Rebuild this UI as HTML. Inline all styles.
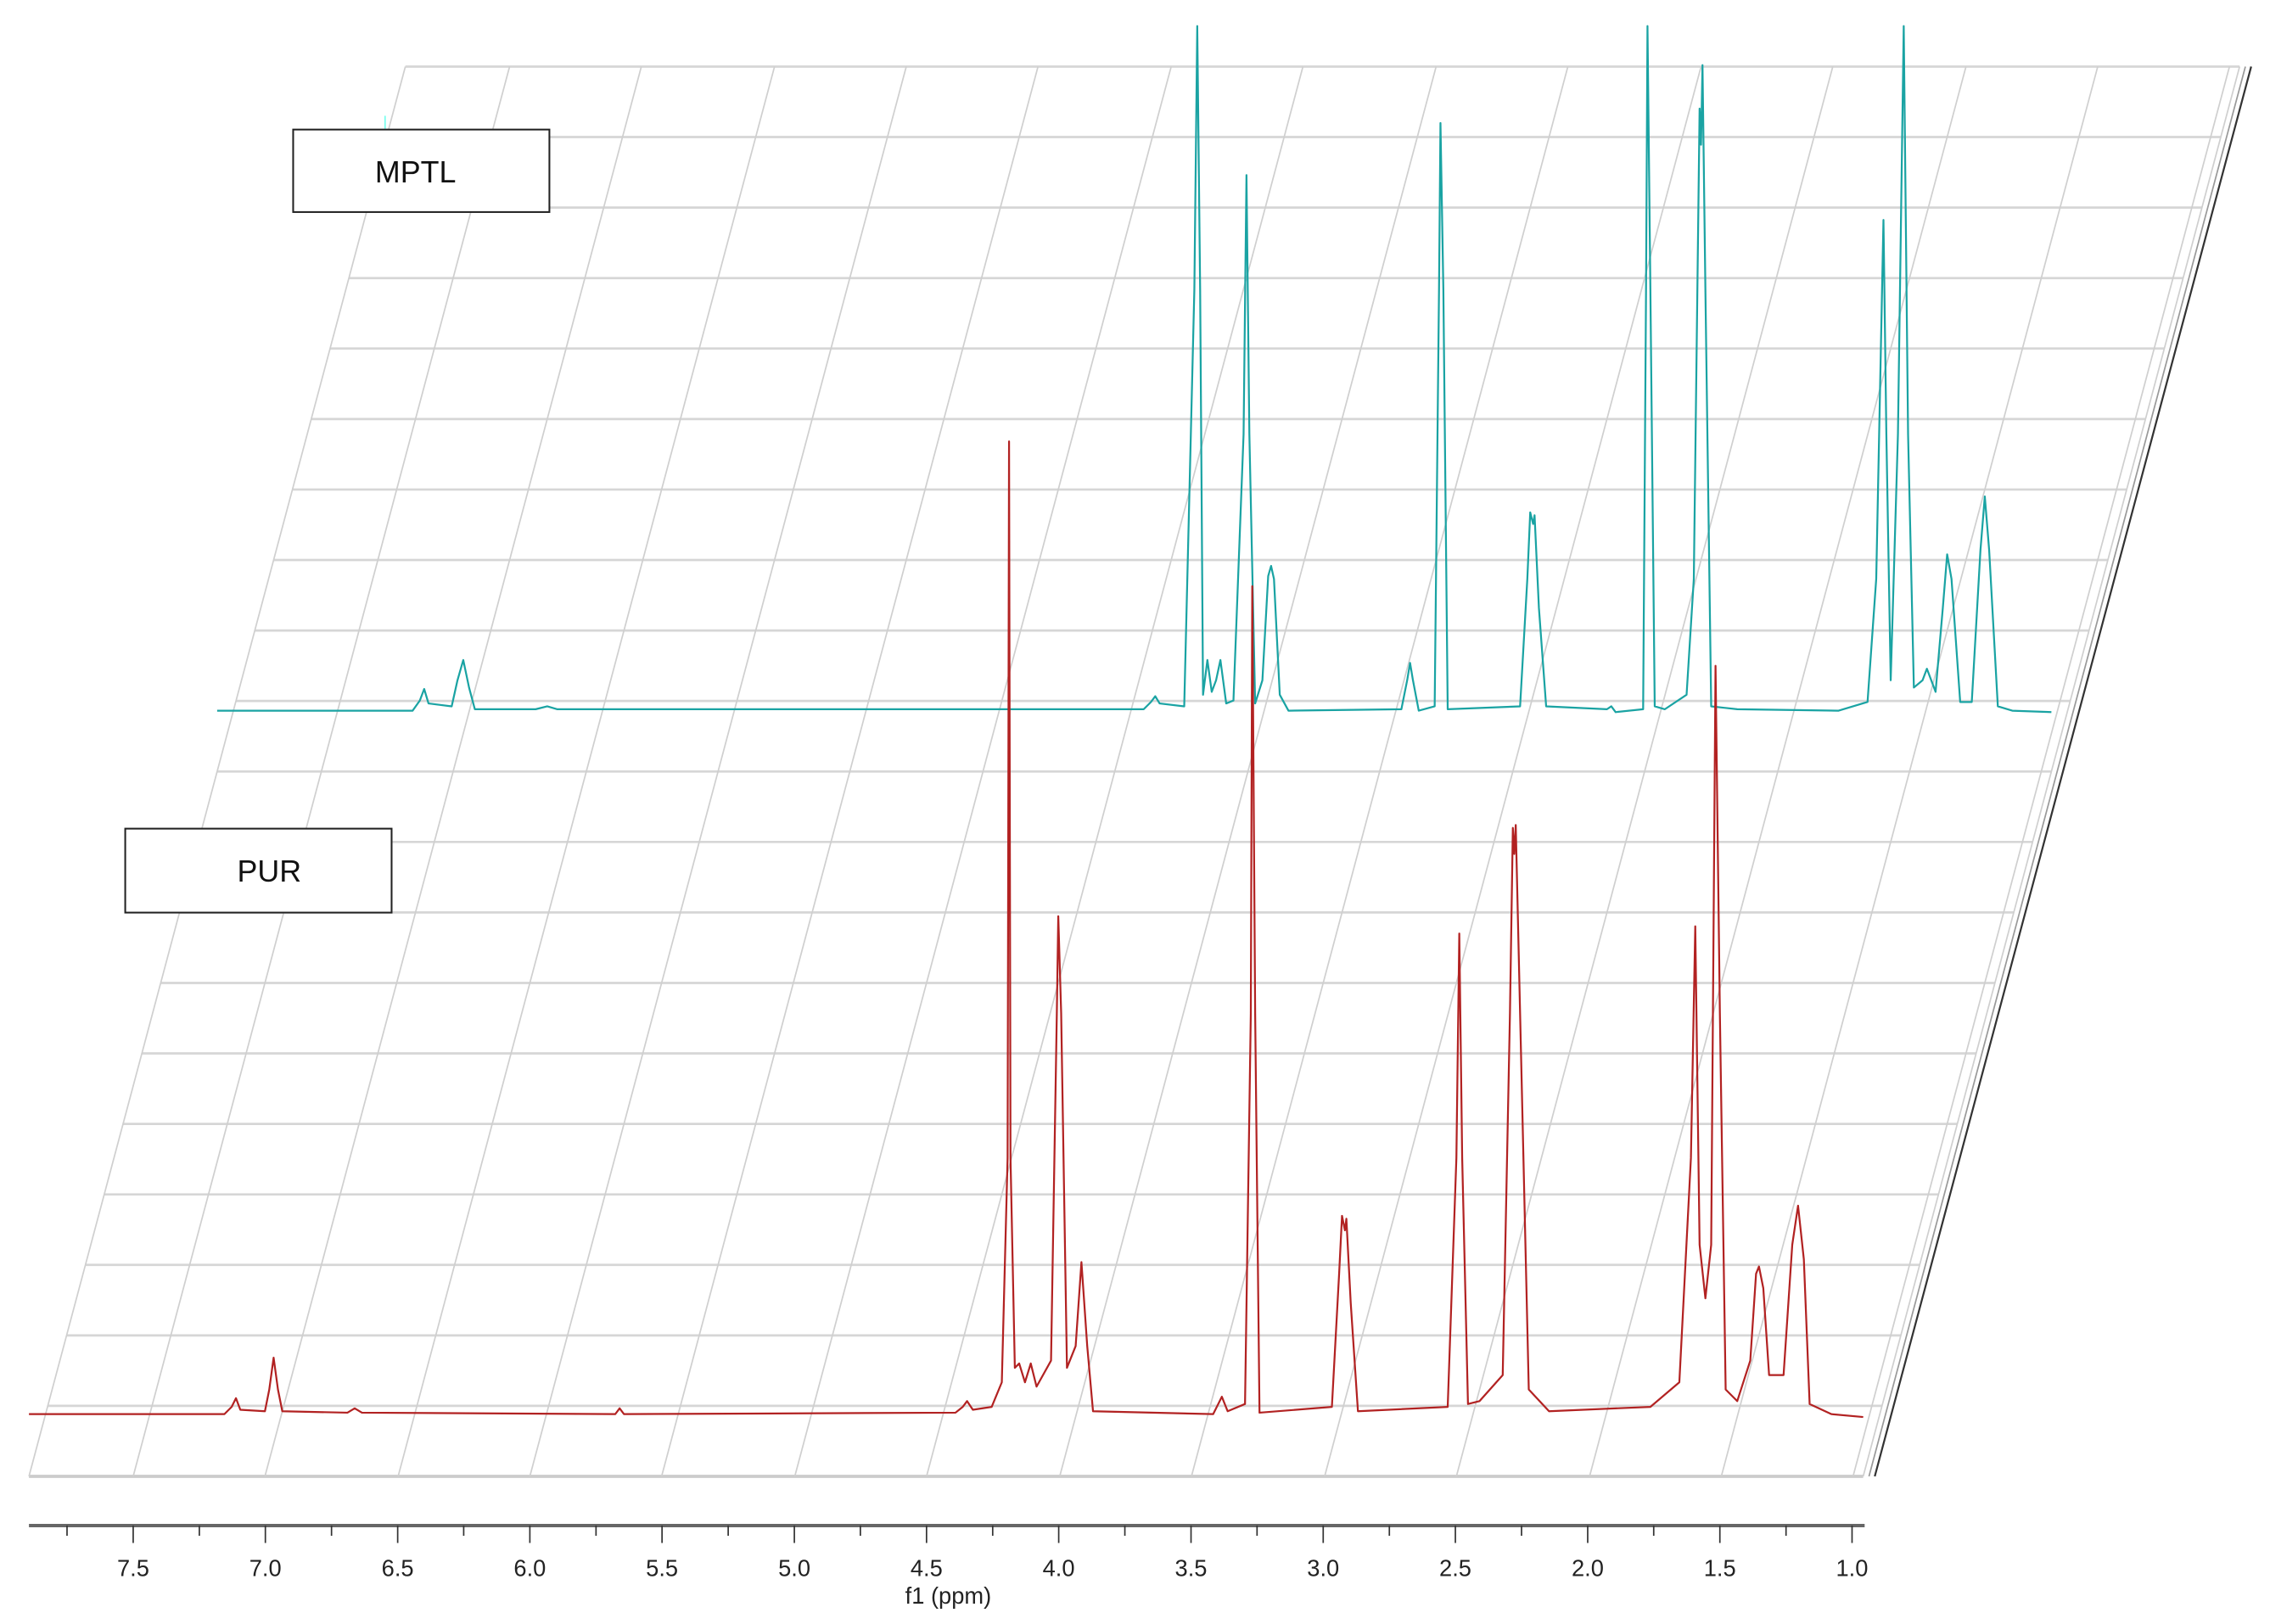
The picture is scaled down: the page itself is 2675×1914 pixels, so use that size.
<!DOCTYPE html>
<html><head><meta charset="utf-8"><style>html,body{margin:0;padding:0;background:#fff}svg{display:block}</style></head>
<body>
<svg width="2675" height="1914" viewBox="0 0 1568 1122" preserveAspectRatio="none" xmlns="http://www.w3.org/2000/svg">
<rect width="1568" height="1122" fill="#fff"/>
<g stroke="#d6d6d6" stroke-width="1.6" fill="none">
<line x1="280" y1="46" x2="1547" y2="46"/>
<line x1="267" y1="94.7" x2="1534" y2="94.7"/>
<line x1="254" y1="143.4" x2="1521" y2="143.4"/>
<line x1="241" y1="192.1" x2="1508" y2="192.1"/>
<line x1="228" y1="240.8" x2="1495" y2="240.8"/>
<line x1="215" y1="289.5" x2="1482" y2="289.5"/>
<line x1="202" y1="338.2" x2="1469" y2="338.2"/>
<line x1="189" y1="386.9" x2="1456" y2="386.9"/>
<line x1="176" y1="435.6" x2="1443" y2="435.6"/>
<line x1="163" y1="484.3" x2="1430" y2="484.3"/>
<line x1="150" y1="533" x2="1417" y2="533"/>
<line x1="137" y1="581.7" x2="1404" y2="581.7"/>
<line x1="124" y1="630.4" x2="1391" y2="630.4"/>
<line x1="111" y1="679.1" x2="1378" y2="679.1"/>
<line x1="98" y1="727.8" x2="1365" y2="727.8"/>
<line x1="85" y1="776.5" x2="1352" y2="776.5"/>
<line x1="72" y1="825.2" x2="1339" y2="825.2"/>
<line x1="59" y1="873.9" x2="1326" y2="873.9"/>
<line x1="46" y1="922.6" x2="1313" y2="922.6"/>
<line x1="33" y1="971.3" x2="1300" y2="971.3"/>
<line x1="20" y1="1020" x2="1287" y2="1020" stroke-width="2.2" stroke="#ccc"/>
</g>
<g stroke="#cfcfcf" stroke-width="1" fill="none">
<line x1="20" y1="1020" x2="280" y2="46"/>
<line x1="92" y1="1020" x2="352" y2="46"/>
<line x1="183" y1="1020" x2="443" y2="46"/>
<line x1="275" y1="1020" x2="535" y2="46"/>
<line x1="366" y1="1020" x2="626" y2="46"/>
<line x1="457" y1="1020" x2="717" y2="46"/>
<line x1="549" y1="1020" x2="809" y2="46"/>
<line x1="640" y1="1020" x2="900" y2="46"/>
<line x1="732" y1="1020" x2="992" y2="46"/>
<line x1="823" y1="1020" x2="1083" y2="46"/>
<line x1="915" y1="1020" x2="1175" y2="46"/>
<line x1="1006" y1="1020" x2="1266" y2="46"/>
<line x1="1098" y1="1020" x2="1358" y2="46"/>
<line x1="1189" y1="1020" x2="1449" y2="46"/>
<line x1="1280" y1="1020" x2="1540" y2="46"/>
<line x1="1287" y1="1020" x2="1547" y2="46"/>
<line x1="1291" y1="1020" x2="1551" y2="46" stroke="#999"/>
</g>
<line x1="1295" y1="1020" x2="1555" y2="46" stroke="#333" stroke-width="1.3"/>
<line x1="266" y1="80" x2="266" y2="89" stroke="#7fe" stroke-width="1"/>
<path fill="none" stroke="#1aa3a3" stroke-width="1.3" stroke-linejoin="round" d="M150,491 L285,491 L290,484 L293,476 L296,486 L312,488 L316,470 L320,456 L324,475 L328,490 L370,490 L378,488 L385,490 L790,490 L795,485 L798,481 L801,486 L818,488 L825,200 L827,18 L829,200 L831,480 L834,456 L837,478 L840,470 L843,456 L847,486 L852,484 L859,300 L861,121 L863,300 L867,486 L872,470 L876,398 L878,391 L880,400 L884,480 L890,491 L968,490 L972,470 L974,458 L976,470 L980,491 L991,488 L994,200 L995,85 L997,200 L1000,490 L1050,488 L1055,400 L1057,354 L1059,362 L1060,356 L1063,420 L1068,488 L1110,490 L1113,488 L1116,492 L1135,490 L1137,200 L1138,18 L1140,200 L1143,488 L1150,490 L1165,480 L1170,400 L1174,75 L1175,100 L1176,45 L1178,200 L1182,488 L1200,490 L1270,491 L1290,485 L1296,400 L1301,152 L1303,300 L1306,470 L1311,300 L1315,18 L1318,300 L1322,475 L1328,470 L1331,462 L1334,470 L1337,478 L1342,420 L1345,383 L1348,400 L1354,485 L1362,485 L1368,380 L1371,343 L1374,380 L1380,488 L1390,491 L1417,492"/>
<path fill="none" stroke="#b22222" stroke-width="1.3" stroke-linejoin="round" d="M20,977 L155,977 L160,972 L163,966 L166,974 L183,975 L186,960 L189,938 L192,960 L195,975 L240,976 L245,973 L250,976 L425,977 L428,973 L431,977 L660,976 L665,972 L668,968 L672,974 L685,972 L692,955 L696,800 L697,305 L698,800 L701,945 L704,942 L708,955 L712,942 L716,958 L726,940 L730,700 L731,633 L733,700 L737,945 L743,930 L747,872 L751,930 L755,975 L838,977 L844,965 L848,975 L860,970 L864,700 L865,405 L867,700 L870,976 L920,972 L925,880 L927,840 L929,850 L930,842 L933,900 L938,975 L1000,972 L1006,800 L1008,645 L1010,800 L1014,970 L1022,968 L1038,950 L1043,700 L1045,572 L1046,590 L1047,570 L1050,700 L1056,960 L1070,975 L1140,972 L1160,955 L1168,800 L1171,640 L1174,860 L1178,897 L1182,860 L1185,460 L1188,700 L1192,960 L1200,968 L1209,940 L1213,880 L1215,875 L1218,890 L1222,950 L1232,950 L1238,860 L1242,833 L1246,870 L1250,970 L1265,977 L1287,979"/>
<rect x="202.5" y="89.5" width="177" height="57" fill="#fff" stroke="#222" stroke-width="1.2"/>
<text x="287" y="126" font-family="Liberation Sans, sans-serif" font-size="21" text-anchor="middle" fill="#111">MPTL</text>
<rect x="86.5" y="572.5" width="184" height="58" fill="#fff" stroke="#222" stroke-width="1.2"/>
<text x="186" y="609" font-family="Liberation Sans, sans-serif" font-size="21" text-anchor="middle" fill="#111">PUR</text>
<line x1="20" y1="1054" x2="1288" y2="1054" stroke="#666" stroke-width="2.4"/>
<g stroke="#333" stroke-width="1">
<path d="M92,1054V1066M183.3,1054V1066M274.7,1054V1066M366,1054V1066M457.3,1054V1066M548.7,1054V1066M640,1054V1066M731.3,1054V1066M822.7,1054V1066M914,1054V1066M1005.3,1054V1066M1096.7,1054V1066M1188,1054V1066M1279.3,1054V1066"/>
<path d="M46.3,1054V1061M137.7,1054V1061M229,1054V1061M320.3,1054V1061M411.7,1054V1061M503,1054V1061M594.3,1054V1061M685.7,1054V1061M777,1054V1061M868.3,1054V1061M959.7,1054V1061M1051,1054V1061M1142.3,1054V1061M1233.7,1054V1061"/>
</g>
<g font-family="Liberation Sans, sans-serif" font-size="16" fill="#222" text-anchor="middle">
<text x="92" y="1089">7.5</text><text x="183.3" y="1089">7.0</text><text x="274.7" y="1089">6.5</text><text x="366" y="1089">6.0</text><text x="457.3" y="1089">5.5</text><text x="548.7" y="1089">5.0</text><text x="640" y="1089">4.5</text><text x="731.3" y="1089">4.0</text><text x="822.7" y="1089">3.5</text><text x="914" y="1089">3.0</text><text x="1005.3" y="1089">2.5</text><text x="1096.7" y="1089">2.0</text><text x="1188" y="1089">1.5</text><text x="1279.3" y="1089">1.0</text>
<text x="655" y="1108">f1 (ppm)</text>
</g>
</svg>
</body></html>
